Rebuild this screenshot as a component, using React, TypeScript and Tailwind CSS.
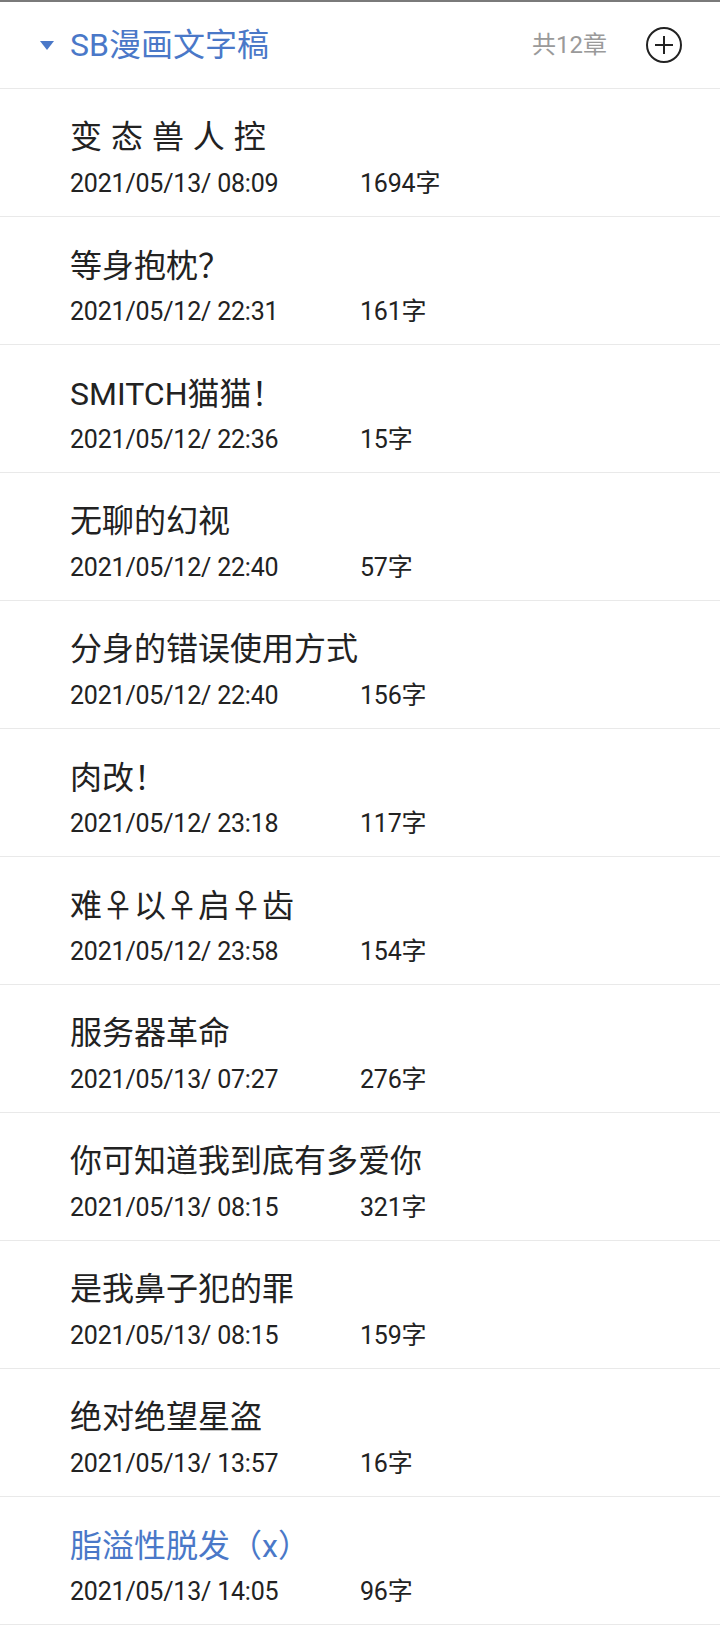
import React from "react";

const CJK = "font-['Noto_Sans_CJK_SC',sans-serif] leading-none";

const items: { title: React.ReactNode; date: string; count: string; active?: boolean }[] = [
  { title: <span className="[word-spacing:1px]">变 态 兽 人 控</span>, date: "2021/05/13/ 08:09", count: "1694字" },
  { title: <>等身抱枕<span className={CJK}>{"\uFF1F"}</span></>, date: "2021/05/12/ 22:31", count: "161字" },
  { title: <>SMITCH猫猫<span className={CJK}>{"\uFF01"}</span></>, date: "2021/05/12/ 22:36", count: "15字" },
  { title: "无聊的幻视", date: "2021/05/12/ 22:40", count: "57字" },
  { title: "分身的错误使用方式", date: "2021/05/12/ 22:40", count: "156字" },
  { title: <>肉改<span className={CJK}>{"\uFF01"}</span></>, date: "2021/05/12/ 23:18", count: "117字" },
  {
    title: (
      <>
        难<span className={CJK}>♀</span>以<span className={CJK}>♀</span>启<span className={CJK}>♀</span>齿
      </>
    ),
    date: "2021/05/12/ 23:58",
    count: "154字",
  },
  { title: "服务器革命", date: "2021/05/13/ 07:27", count: "276字" },
  { title: "你可知道我到底有多爱你", date: "2021/05/13/ 08:15", count: "321字" },
  { title: "是我鼻子犯的罪", date: "2021/05/13/ 08:15", count: "159字" },
  { title: "绝对绝望星盗", date: "2021/05/13/ 13:57", count: "16字" },
  {
    title: (
      <>
        脂溢性脱发<span className={CJK}>{"\uFF08"}</span>x<span className={CJK}>{"\uFF09"}</span>
      </>
    ),
    date: "2021/05/13/ 14:05",
    count: "96字",
    active: true,
  },
];

export default function App() {
  return (
    <div className="w-[720px] min-h-[1628px] bg-white font-['Roboto','Noto_Sans_CJK_SC',sans-serif] text-[#222222]">
      <div className="border-t-2 border-[#7a7a7a]">
        <div className="flex h-[87px] items-center border-b border-[#e9e9e9]">
          <svg width="14" height="10" viewBox="0 0 14 10" className="ml-[40px] mt-[1px]">
            <polygon points="0,0 14,0 7,9" fill="#4a78c8" />
          </svg>
          <div className="ml-[16px] text-[32px] leading-[40px] text-[#4a78c8]">SB漫画文字稿</div>
          <div className="ml-auto text-[24px] leading-[30px] text-[#9a9a9a]">共12章</div>
          <svg width="38" height="38" viewBox="0 0 38 38" className="ml-[38px] mr-[37px]">
            <circle cx="19" cy="19" r="17" fill="none" stroke="#222" strokeWidth="2" />
            <path d="M19 10v18M10 19h18" stroke="#222" strokeWidth="2" />
          </svg>
        </div>
        {items.map((it, i) => (
          <div key={i} className="h-[128px] border-b border-[#e9e9e9] pl-[70px] pt-[30px]">
            <div
              className={`h-[36px] text-[32px] leading-[36px] ${it.active ? "text-[#4a78c8]" : "text-[#222222]"}`}
            >
              {it.title}
            </div>
            <div className="mt-[14px] flex text-[25px] leading-[30px] tracking-[-0.2px] text-[#222222]">
              <span className="w-[290px]">{it.date}</span>
              <span>{it.count}</span>
            </div>
          </div>
        ))}
      </div>
    </div>
  );
}
